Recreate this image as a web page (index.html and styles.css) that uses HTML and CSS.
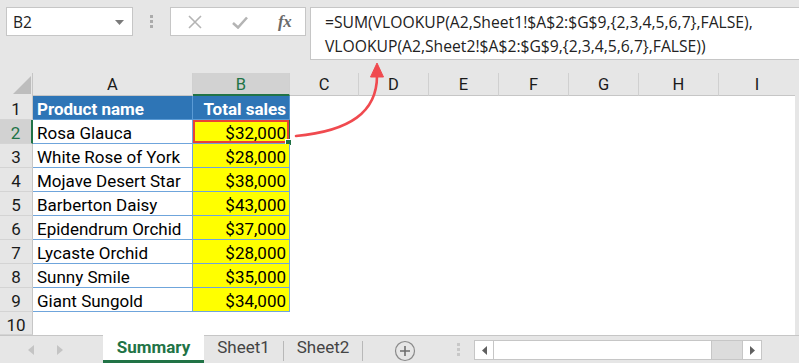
FILE: index.html
```html
<!DOCTYPE html>
<html>
<head>
<meta charset="utf-8">
<link rel="stylesheet" href="styles.css">
</head>
<body>
<div class="app">
  <div class="toolbar">
    <div class="namebox">
      <span class="nb-text">B2</span>
      <svg class="caret" width="9" height="5" viewBox="0 0 9 5"><path d="M0 0 L9 0 L4.5 5 Z" fill="#7a7a7a"/></svg>
    </div>
    <div class="grip"><i></i><i></i><i></i></div>
    <div class="fxbtns">
      <svg class="ico" width="14" height="14" viewBox="0 0 14 14"><path d="M1 1 L13 13 M13 1 L1 13" stroke="#b4b4b4" stroke-width="1.6" fill="none"/></svg>
      <svg class="ico" width="16" height="13" viewBox="0 0 16 13"><path d="M1 7 L6 11.5 L15 1.5" stroke="#b4b4b4" stroke-width="2.6" fill="none"/></svg>
      <span class="fx">fx</span>
    </div>
    <div class="formula">=SUM(VLOOKUP(A2,Sheet1!$A$2:$G$9,{2,3,4,5,6,7},FALSE),<br>VLOOKUP(A2,Sheet2!$A$2:$G$9,{2,3,4,5,6,7},FALSE))</div>
  </div>

  <div class="sheet">
    <div class="colheads">
      <div class="corner"><svg width="18" height="18" viewBox="0 0 18 18"><path d="M18 0 L18 18 L0 18 Z" fill="#bdbdbd"/></svg></div>
      <div class="ch w-a">A</div>
      <div class="ch w-b sel">B</div>
      <div class="ch w-c">C</div>
      <div class="ch w-d">D</div>
      <div class="ch w-d">E</div>
      <div class="ch w-d">F</div>
      <div class="ch w-d">G</div>
      <div class="ch w-h">H</div>
      <div class="ch w-i">I</div>
    </div>

    <div class="row">
      <div class="rh">1</div>
      <div class="cell w-a th">Product name</div>
      <div class="cell w-b th num">Total sales</div>
      <div class="rest"></div>
    </div>
    <div class="row">
      <div class="rh sel">2</div>
      <div class="cell w-a">Rosa Glauca</div>
      <div class="cell w-b y num active">$32,000<span class="handle"></span></div>
      <div class="rest"></div>
    </div>
    <div class="row">
      <div class="rh">3</div>
      <div class="cell w-a">White Rose of York</div>
      <div class="cell w-b y num">$28,000</div>
      <div class="rest"></div>
    </div>
    <div class="row">
      <div class="rh">4</div>
      <div class="cell w-a">Mojave Desert Star</div>
      <div class="cell w-b y num">$38,000</div>
      <div class="rest"></div>
    </div>
    <div class="row">
      <div class="rh">5</div>
      <div class="cell w-a">Barberton Daisy</div>
      <div class="cell w-b y num">$43,000</div>
      <div class="rest"></div>
    </div>
    <div class="row">
      <div class="rh">6</div>
      <div class="cell w-a">Epidendrum Orchid</div>
      <div class="cell w-b y num">$37,000</div>
      <div class="rest"></div>
    </div>
    <div class="row">
      <div class="rh">7</div>
      <div class="cell w-a">Lycaste Orchid</div>
      <div class="cell w-b y num">$28,000</div>
      <div class="rest"></div>
    </div>
    <div class="row">
      <div class="rh">8</div>
      <div class="cell w-a">Sunny Smile</div>
      <div class="cell w-b y num">$35,000</div>
      <div class="rest"></div>
    </div>
    <div class="row">
      <div class="rh">9</div>
      <div class="cell w-a">Giant Sungold</div>
      <div class="cell w-b y num">$34,000</div>
      <div class="rest"></div>
    </div>
    <div class="row last">
      <div class="rh">10</div>
      <div class="rest"></div>
    </div>
  </div>

  <div class="tabs">
    <div class="nav">
      <svg width="6" height="10" viewBox="0 0 6 10"><path d="M6 0 L6 10 L0 5 Z" fill="#c4c4c4"/></svg>
      <svg width="6" height="10" viewBox="0 0 6 10"><path d="M0 0 L0 10 L6 5 Z" fill="#c4c4c4"/></svg>
    </div>
    <div class="tab active">Summary</div>
    <div class="tab t1">Sheet1</div>
    <div class="sep"></div>
    <div class="tab t2">Sheet2</div>
    <div class="sep"></div>
    <div class="plus"><svg width="22" height="22" viewBox="0 0 22 22"><circle cx="11" cy="11" r="9.5" fill="none" stroke="#8a8a8a" stroke-width="1.2"/><path d="M6 11 H16 M11 6 V16" stroke="#6e6e6e" stroke-width="1.6"/></svg></div>
    <div class="grip2"><i></i><i></i><i></i></div>
    <div class="hscroll">
      <div class="sbtn"><svg width="5" height="9" viewBox="0 0 5 9"><path d="M5 0 L5 9 L0 4.5 Z" fill="#606060"/></svg></div>
      <div class="thumb"></div>
      <div class="track"></div>
      <div class="sbtn"><svg width="5" height="9" viewBox="0 0 5 9"><path d="M0 0 L0 9 L5 4.5 Z" fill="#606060"/></svg></div>
    </div>
  </div>

  <svg class="arrow" width="799" height="363" viewBox="0 0 799 363">
    <path d="M296 136 C350 131 377 112 377 76" fill="none" stroke="#f04a4f" stroke-width="2.6" stroke-linecap="round"/>
    <path d="M370.5 77 L377 63 L383.5 77 Z" fill="#f04a4f" stroke="#f04a4f" stroke-width="1" stroke-linejoin="round"/>
  </svg>
</div>
</body>
</html>
```
FILE: styles.css
```css
html, body {
  margin: 0;
  padding: 0;
}
body {
  width: 799px;
  height: 363px;
  overflow: hidden;
  background: #e6e6e6;
  font-family: Roboto, "Liberation Sans", sans-serif;
}
.app {
  position: relative;
  width: 799px;
  height: 363px;
}

/* toolbar */
.toolbar {
  height: 73px;
  box-sizing: border-box;
  padding: 7px 0 0 6px;
  display: flex;
  align-items: flex-start;
}
.namebox {
  width: 127px;
  height: 29px;
  box-sizing: border-box;
  border: 1px solid #c6c6c6;
  background: #fff;
  display: flex;
  align-items: center;
  justify-content: space-between;
  padding: 0 8px 0 6px;
  font-family: "Open Sans", "Noto Sans", sans-serif;
  font-size: 15.5px;
  color: #222;
}
.caret { margin-top: 1px; }
.grip {
  width: 37px;
  height: 29px;
  display: flex;
  flex-direction: column;
  align-items: center;
  justify-content: center;
  gap: 2px;
}
.grip i, .grip2 i {
  display: block;
  width: 3px;
  height: 3px;
  background: #ababab;
}
.fxbtns {
  width: 136px;
  height: 29px;
  box-sizing: border-box;
  border: 1px solid #c6c6c6;
  background: #fff;
  display: flex;
  align-items: center;
  padding: 0 0 0 17px;
}
.fxbtns .ico:first-child { margin-right: 30px; }
.fxbtns .ico:nth-child(2) { margin-top: 2px; margin-right: 30px; }
.fx {
  font-family: "Liberation Serif", "DejaVu Serif", serif;
  font-style: italic;
  font-weight: bold;
  font-size: 17px;
  color: #6a6a6a;
  letter-spacing: -0.5px;
}
.formula {
  margin-left: 4px;
  flex: 1;
  height: 53px;
  box-sizing: border-box;
  border: 1px solid #c6c6c6;
  border-right: none;
  background: #fff;
  padding: 2px 0 0 14px;
  font-family: "Open Sans", "Noto Sans", sans-serif;
  font-size: 15.7px;
  line-height: 24px;
  color: #222;
  white-space: nowrap;
}

/* sheet */
.sheet {
  width: 795px;
  height: 262px;
  overflow: hidden;
}
.colheads {
  display: flex;
  height: 23px;
}
.corner {
  width: 33px;
  flex: none;
  display: flex;
  align-items: flex-end;
  justify-content: flex-end;
  box-sizing: border-box;
  padding: 0 1px 2px 0;
  border-right: 1px solid #c6c6c6;
}
.ch {
  flex: none;
  box-sizing: border-box;
  border-right: 1px solid #d0d0d0;
  border-bottom: 1px solid #c6c6c6;
  text-align: center;
  font-size: 16.5px;
  line-height: 23px;
  color: #1a1a1a;
}
.ch.sel {
  background: #d2d2d2;
  color: #217346;
  border-bottom: 2px solid #217346;
}
.w-a { width: 160px; }
.w-b { width: 97px; }
.w-c { width: 69px; }
.w-d { width: 70px; }
.w-h { width: 80px; }
.w-i { width: 76px; border-right: none; }

.row {
  display: flex;
  height: 24px;
}
.row.last { height: 23px; }
.rh {
  width: 33px;
  flex: none;
  box-sizing: border-box;
  border-right: 1px solid #c6c6c6;
  border-bottom: 1px solid #d4d4d4;
  text-align: center;
  font-size: 17px;
  padding-top: 2px;
  line-height: 22px;
  color: #1a1a1a;
}
.rh.sel {
  background: #d2d2d2;
  color: #217346;
  border-right: 2px solid #217346;
}
.rest {
  flex: 1;
  background: #fff;
}
.cell {
  flex: none;
  box-sizing: border-box;
  background: #fff;
  border-right: 1px solid #6fa5dc;
  border-bottom: 1px solid #6fa5dc;
  padding: 2px 3px 0 4px;
  font-size: 17px;
  line-height: 22px;
  color: #000;
  white-space: nowrap;
  position: relative;
}
.cell.th {
  background: #2e75b6;
  color: #fff;
  font-weight: bold;
  border-color: #5b9bd5;
}
.cell.y { background: #ffff00; }
.cell.num { text-align: right; }
.cell.active {
  box-shadow: inset 0 0 0 2px #ea4335;
  border-right: 1px solid #217346;
}
.handle {
  position: absolute;
  right: -3px;
  bottom: -3px;
  width: 5px;
  height: 5px;
  background: #217346;
  border: 1px solid #fff;
}

/* tabs */
.tabs {
  height: 28px;
  box-sizing: border-box;
  border-top: 1px solid #c6c6c6;
  display: flex;
  align-items: stretch;
  font-size: 17px;
}
.nav {
  width: 103px;
  box-sizing: border-box;
  display: flex;
  align-items: center;
  padding-left: 28px;
  gap: 23px;
}
.tab {
  display: flex;
  align-items: center;
  justify-content: center;
  color: #444;
  padding-bottom: 5px;
}
.tab.active {
  width: 101px;
  background: #fff;
  margin-top: -1px;
  color: #217346;
  font-weight: bold;
  font-size: 17px;
  border-bottom: 3px solid #217346;
  padding-bottom: 1px;
}
.tab.t1 { width: 79px; }
.tab.t2 { width: 78px; }
.sep {
  width: 1px;
  background: #b8b8b8;
  margin: 5px 0 2px;
}
.plus {
  width: 84px;
  display: flex;
  align-items: center;
  justify-content: center;
  padding-top: 2px;
}
.grip2 {
  width: 20px;
  display: flex;
  flex-direction: column;
  align-items: center;
  justify-content: center;
  gap: 2px;
  margin-left: 1px;
}
.grip2 i { background: #c8c8c8; }
.hscroll {
  margin: 4px 0 3px 6px;
  width: 288px;
  display: flex;
  box-sizing: border-box;
  border: 1px solid #c6c6c6;
}
.sbtn {
  width: 18px;
  background: #fff;
  display: flex;
  align-items: center;
  justify-content: center;
}
.sbtn:first-child { border-right: 1px solid #c6c6c6; }
.sbtn:last-child { border-left: 1px solid #c6c6c6; }
.thumb {
  width: 217px;
  background: #fff;
  border-right: 1px solid #c6c6c6;
}
.track {
  flex: 1;
  background: #dcdcdc;
}

.arrow {
  position: absolute;
  left: 0;
  top: 0;
  pointer-events: none;
}
```
